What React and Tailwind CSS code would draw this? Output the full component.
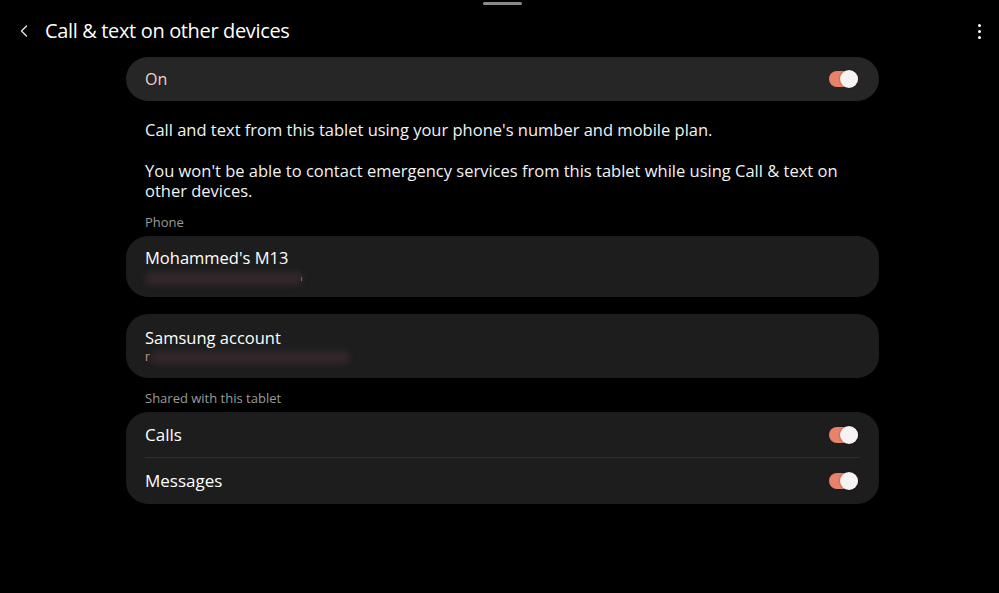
import { ChevronLeft } from 'lucide-react';

const font = { fontFamily: '"Open Sans", "Noto Sans", sans-serif' };

function Toggle() {
  return (
    <div className="relative h-[16px] w-[29px] rounded-full bg-[#e8826a]">
      <div className="absolute right-0 top-1/2 h-[18px] w-[18px] -translate-y-1/2 rounded-full bg-[#f7f3f2] shadow-[0_0_2px_rgba(0,0,0,0.5)]" />
    </div>
  );
}

function Blurred({ width }) {
  return (
    <div
      className="h-[13px] rounded-full bg-[#33272a] blur-[3px]"
      style={{ width }}
    />
  );
}

export default function App() {
  return (
    <div className="relative h-[593px] w-[999px] overflow-hidden bg-black text-white" style={font}>
      {/* handle */}
      <div className="absolute left-[483px] top-[2px] h-[3px] w-[39px] rounded-full bg-[#8a8a8a]" />

      {/* header */}
      <div className="flex h-[62px] items-center pl-[14px] pr-[14px]">
        <ChevronLeft className="h-[20px] w-[20px] text-[#e8e8e8]" strokeWidth={1.6} />
        <h1 className="ml-[11px] text-[20px] font-medium tracking-[-0.35px]">Call &amp; text on other devices</h1>
        <div className="ml-auto flex flex-col gap-[3px] pr-[4px]">
          <span className="h-[3px] w-[3px] rounded-full bg-white" />
          <span className="h-[3px] w-[3px] rounded-full bg-white" />
          <span className="h-[3px] w-[3px] rounded-full bg-white" />
        </div>
      </div>

      <div className="ml-[126px] -mt-[5px] w-[753px]">
        {/* master switch */}
        <div className="flex h-[44px] items-center justify-between rounded-full bg-[#262626] pl-[19px] pr-[21px]">
          <span className="text-[16px] font-medium text-[#f4d2c6]">On</span>
          <Toggle />
        </div>

        {/* description */}
        <div className="px-[19px] pt-[19px] text-[16.5px] leading-[20px] text-[#f2f2f2]">
          <p>Call and text from this tablet using your phone's number and mobile plan.</p>
          <p className="mt-[21px]">
            You won't be able to contact emergency services from this tablet while using Call &amp; text on other devices.
          </p>
        </div>

        {/* phone */}
        <p className="mt-[12px] px-[19px] text-[13px] font-medium text-[#9b9b9b]">Phone</p>
        <div className="mt-[3px] flex h-[61px] flex-col justify-center rounded-[22px] bg-[#1d1d1d] px-[19px]">
          <span className="text-[16.5px] leading-[22px]">Mohammed's M13</span>
          <div className="mt-[3px] flex items-center">
            <Blurred width={158} />
            <span className="ml-[-2px] h-[4px] w-[1px] bg-[#bbb]" />
          </div>
        </div>

        {/* samsung account */}
        <div className="mt-[17px] flex h-[64px] flex-col justify-center rounded-[22px] bg-[#1d1d1d] px-[19px]">
          <span className="text-[16.5px] leading-[22px]">Samsung account</span>
          <div className="mt-[1px] flex items-center">
            <span className="text-[12px] leading-[14px] text-[#e8a48f]">r</span>
            <Blurred width={200} />
          </div>
        </div>

        {/* shared */}
        <p className="mt-[11px] px-[19px] text-[13px] font-medium text-[#9b9b9b]">Shared with this tablet</p>
        <div className="mt-[4px] rounded-[22px] bg-[#1d1d1d] px-[19px]">
          <div className="flex h-[46px] items-center justify-between border-b border-[#2e2e2e] pr-[2px]">
            <span className="text-[17px]">Calls</span>
            <Toggle />
          </div>
          <div className="flex h-[46px] items-center justify-between pr-[2px]">
            <span className="text-[17px]">Messages</span>
            <Toggle />
          </div>
        </div>
      </div>
    </div>
  );
}
